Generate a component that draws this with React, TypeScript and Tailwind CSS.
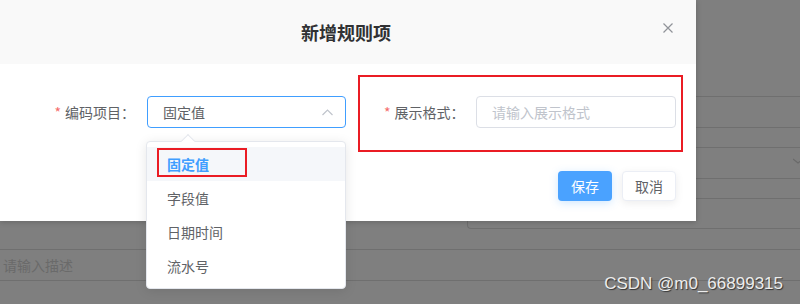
import React from "react";

const line = "border-t border-[#6f6f6f]";

function Backdrop() {
  return (
    <div className="flex flex-col">
      <div className="h-[96px]" />
      <div className={`h-[31px] ${line}`} />
      <div className={`h-[20px] ${line}`} />
      <div className={`h-[31px] ${line} flex items-center justify-end`}>
        <svg width="8" height="8" viewBox="0 0 8 8" className="mr-[-1px] mt-[-4px]">
          <polyline points="0,2 5,6 10,2" fill="none" stroke="#6a6a6a" strokeWidth="1.2" />
        </svg>
      </div>
      <div className={`h-[20px] ${line}`} />
      <div className={`h-[31px] ${line}`}>
        <div className="ml-[467px] h-full border-l border-b border-[#6f6f6f] rounded-bl-[4px]" />
      </div>
      <div className="h-[20px]" />
      <div className={`h-[31px] ${line} flex items-center pl-[3px] text-[14px] text-[#6a6a6a]`}>请输入描述</div>
      <div className={`h-[24px] ${line}`} />
    </div>
  );
}

function Dialog() {
  return (
    <div className="absolute left-0 top-0 w-[696px] h-[221px] bg-white shadow-[0_1px_6px_rgba(0,0,0,0.2)]">
      <div className="relative h-[64px] bg-[#f9f9f9] flex items-center justify-center pr-[4px]">
        <span className="text-[18px] font-bold text-[#303133] leading-none">新增规则项</span>
        <svg width="10" height="10" viewBox="0 0 10 10" className="absolute right-[23px] top-[23px]">
          <path d="M0.5 0.5 L9.5 9.5 M9.5 0.5 L0.5 9.5" stroke="#909399" strokeWidth="1.2" />
        </svg>
      </div>
      <div className="pt-[11px]">
        <div className="flex items-start">
          <div className="w-[346px] mt-[21px] flex items-center justify-end">
            <label className="text-[14px] text-[#606266] flex items-center pr-[12px]">
              <span className="text-[#f56c6c] mr-[4px]">*</span>编码项目：
            </label>
            <div className="w-[199px] h-[32px] border border-[#409eff] rounded-[4px] flex items-center justify-between pl-[15px] pr-[12px]">
              <span className="text-[14px] text-[#606266]">固定值</span>
              <svg width="11" height="7" viewBox="0 0 11 7">
                <polyline points="0.5,6 5.5,1 10.5,6" fill="none" stroke="#c0c4cc" strokeWidth="1.2" />
              </svg>
            </div>
          </div>
          <div className="ml-[12px] w-[325px] h-[77px] border-2 border-[#ea1c24] flex items-start pt-[19px] pl-[24px] pr-[5px]">
            <label className="h-[32px] text-[14px] text-[#606266] flex items-center">
              <span className="text-[#f56c6c] mr-[4px]">*</span>展示格式：
            </label>
            <div className="ml-auto w-[200px] h-[32px] border border-[#dcdfe6] rounded-[4px] flex items-center pl-[15px]">
              <span className="text-[14px] text-[#c0c4cc]">请输入展示格式</span>
            </div>
          </div>
        </div>
        <div className="flex justify-end gap-[10px] pr-[20px] mt-[19px]">
          <button className="w-[54px] h-[30px] rounded-[4px] bg-[#4aa2ff] text-white text-[14px] shadow-[0_2px_8px_rgba(64,158,255,0.25)]">保存</button>
          <button className="w-[54px] h-[30px] rounded-[4px] bg-white border border-[#ebeef5] text-[#606266] text-[14px] shadow-[0_2px_8px_rgba(0,0,0,0.08)]">取消</button>
        </div>
      </div>
    </div>
  );
}

function Dropdown() {
  const items = ["固定值", "字段值", "日期时间", "流水号"];
  return (
    <div className="absolute left-[146px] top-[141px] w-[200px] bg-white border border-[#e4e7ed] rounded-[4px] shadow-[0_2px_12px_rgba(0,0,0,0.1)] py-[5px]">
      <div className="absolute left-[36px] top-[-6px] w-[10px] h-[10px] bg-white border-l border-t border-[#e4e7ed] rotate-45" />
      {items.map((t, i) => (
        <div
          key={t}
          className={`relative h-[34px] flex items-center pl-[20px] text-[14px] ${i === 0 ? "bg-[#f5f7fa] text-[#409eff] font-bold" : "text-[#606266]"}`}
        >
          {t}
          {i === 0 && <div className="absolute left-[10px] top-[1px] w-[90px] h-[29px] border-2 border-[#ea1c24]" />}
        </div>
      ))}
    </div>
  );
}

export default function App() {
  return (
    <div
      className="relative w-[800px] h-[304px] overflow-hidden bg-[#7f7f7f]"
      style={{ fontFamily: '"Noto Sans CJK SC", "Noto Sans", sans-serif' }}
    >
      <Backdrop />
      <Dialog />
      <Dropdown />
      <div
        className="absolute right-[17px] bottom-[8px] text-[17px] text-[#ececec] [text-shadow:1px_1px_1px_rgba(0,0,0,0.6)]"
        style={{ fontFamily: '"Liberation Sans", Arial, sans-serif' }}
      >
        CSDN @m0_66899315
      </div>
    </div>
  );
}
